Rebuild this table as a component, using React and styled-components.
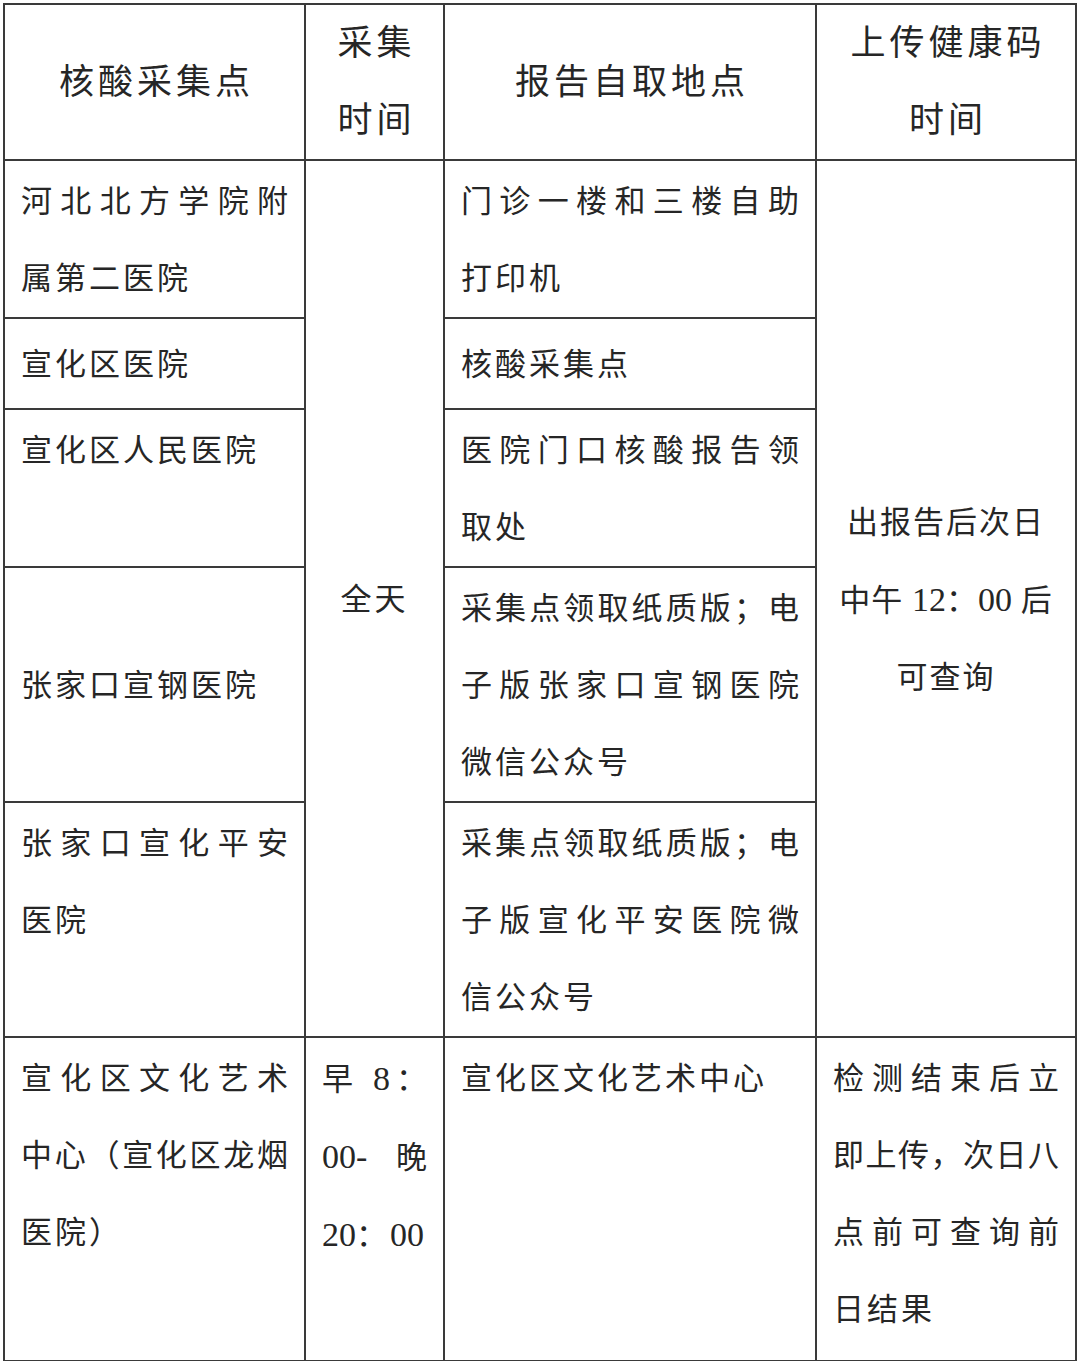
import styled, { createGlobalStyle } from "styled-components";

const GlobalStyle = createGlobalStyle`
  html, body {
    margin: 0;
    background: #ffffff;
  }
  body {
    font-family: "Liberation Serif", "Noto Sans CJK SC", serif;
    color: #262626;
  }
`;

const Page = styled.div`
  padding: 3px;
`;

const Table = styled.table`
  width: 1074px;
  border-collapse: collapse;
  table-layout: fixed;
`;

const Col = styled.col`
  width: ${(p) => p.$w}px;
`;

const Row = styled.tr`
  height: ${(p) => p.$h}px;
`;

const HeadCell = styled.th`
  border: 2px solid #3a3a3a;
  padding: 0 0 0 4px;
  font-weight: 400;
  font-size: 35px;
  line-height: 77px;
  letter-spacing: 4px;
  text-align: center;
  vertical-align: middle;
`;

const Cell = styled.td`
  border: 2px solid #3a3a3a;
  padding: 2px 16px 0;
  font-size: 31px;
  line-height: 77px;
  letter-spacing: ${(p) => (p.$ls !== undefined ? p.$ls : 3)}px;
  text-align: ${(p) => (p.$center ? "center" : "left")};
  vertical-align: ${(p) => (p.$middle ? "middle" : "top")};
`;

const Line = styled.div`
  white-space: nowrap;
  ${(p) =>
    p.$fill &&
    `
    text-align: justify;
    text-align-last: justify;
    letter-spacing: 0;
  `}
  ${(p) => p.$tight && `letter-spacing: 1px;`}
`;

const Num = styled.span`
  font-family: "Liberation Serif", serif;
  font-size: 34px;
  letter-spacing: 0;
`;

export default function App() {
  return (
    <Page>
      <GlobalStyle />
      <Table>
        <colgroup>
          <Col $w={301} />
          <Col $w={139} />
          <Col $w={372} />
          <Col $w={260} />
        </colgroup>
        <tbody>
          <Row $h={156}>
            <HeadCell>核酸采集点</HeadCell>
            <HeadCell>
              <div>采集</div>
              <div>时间</div>
            </HeadCell>
            <HeadCell>报告自取地点</HeadCell>
            <HeadCell>
              <div>上传健康码</div>
              <div>时间</div>
            </HeadCell>
          </Row>

          <Row $h={158}>
            <Cell>
              <Line $fill>河北北方学院附</Line>
              <Line>属第二医院</Line>
            </Cell>
            <Cell rowSpan={5} $center $middle>
              全天
            </Cell>
            <Cell>
              <Line $fill>门诊一楼和三楼自助</Line>
              <Line>打印机</Line>
            </Cell>
            <Cell rowSpan={5} $center $middle $ls={2}>
              <Line>出报告后次日</Line>
              <Line $tight>
                中午 <Num>12</Num>：<Num>00</Num> 后
              </Line>
              <Line>可查询</Line>
            </Cell>
          </Row>

          <Row $h={91}>
            <Cell $middle>
              <Line>宣化区医院</Line>
            </Cell>
            <Cell $middle>
              <Line>核酸采集点</Line>
            </Cell>
          </Row>

          <Row $h={157}>
            <Cell>
              <Line>宣化区人民医院</Line>
            </Cell>
            <Cell>
              <Line $fill>医院门口核酸报告领</Line>
              <Line>取处</Line>
            </Cell>
          </Row>

          <Row $h={235}>
            <Cell $middle>
              <Line>张家口宣钢医院</Line>
            </Cell>
            <Cell>
              <Line $fill>采集点领取纸质版；电</Line>
              <Line $fill>子版张家口宣钢医院</Line>
              <Line>微信公众号</Line>
            </Cell>
          </Row>

          <Row $h={235}>
            <Cell>
              <Line $fill>张家口宣化平安</Line>
              <Line>医院</Line>
            </Cell>
            <Cell>
              <Line $fill>采集点领取纸质版；电</Line>
              <Line $fill>子版宣化平安医院微</Line>
              <Line>信公众号</Line>
            </Cell>
          </Row>

          <Row $h={324}>
            <Cell>
              <Line $fill>宣化区文化艺术</Line>
              <Line $fill>中心（宣化区龙烟</Line>
              <Line>医院）</Line>
            </Cell>
            <Cell>
              <Line $fill>
                早 <Num>8</Num>：
              </Line>
              <Line $fill>
                <Num>00-</Num> 晚
              </Line>
              <Line>
                <Num>20</Num>：<Num>00</Num>
              </Line>
            </Cell>
            <Cell>
              <Line>宣化区文化艺术中心</Line>
            </Cell>
            <Cell>
              <Line $fill>检测结束后立</Line>
              <Line $fill>即上传，次日八</Line>
              <Line $fill>点前可查询前</Line>
              <Line>日结果</Line>
            </Cell>
          </Row>
        </tbody>
      </Table>
    </Page>
  );
}
